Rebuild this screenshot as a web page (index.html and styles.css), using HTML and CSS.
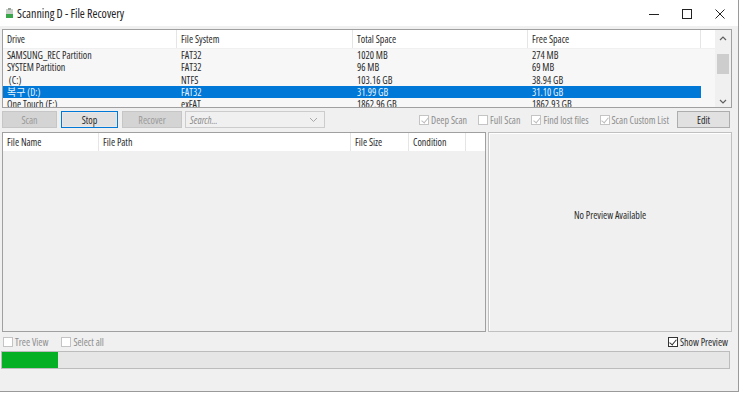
FILE: index.html
```html
<!DOCTYPE html>
<html>
<head>
<meta charset="utf-8">
<link rel="stylesheet" href="styles.css">
</head>
<body>
<div class="window">
  <div class="titlebar">
    <svg class="appicon" width="9" height="11" viewBox="0 0 9 11"><rect x="1" y="1" width="7" height="6" fill="#c9cfc9"/><rect x="1" y="6" width="7" height="4" fill="#3aa64a"/><rect x="3" y="0" width="3" height="2" fill="#9aa39a"/></svg>
    <span class="title">Scanning D - File Recovery</span>
    <div class="controls">
      <svg width="10" height="10" viewBox="0 0 10 10"><line x1="0" y1="5.5" x2="10" y2="5.5" stroke="#222" stroke-width="1"/></svg>
      <svg width="10" height="10" viewBox="0 0 10 10"><rect x="0.5" y="0.5" width="9" height="9" fill="none" stroke="#222" stroke-width="1"/></svg>
      <svg width="10" height="10" viewBox="0 0 10 10"><path d="M0.5 0.5 L9.5 9.5 M9.5 0.5 L0.5 9.5" stroke="#222" stroke-width="1"/></svg>
    </div>
  </div>
  <div class="client">
    <div class="drives">
      <div class="drives-main">
        <div class="lv-head">
          <div class="c c1">Drive</div><div class="c c2">File System</div><div class="c c3">Total Space</div><div class="c c4">Free Space</div><div class="c c5"></div>
        </div>
        <div class="lv-body">
          <div class="row"><div class="c c1">SAMSUNG_REC Partition</div><div class="c c2">FAT32</div><div class="c c3">1020 MB</div><div class="c c4">274 MB</div></div>
          <div class="row"><div class="c c1">SYSTEM Partition</div><div class="c c2">FAT32</div><div class="c c3">96 MB</div><div class="c c4">69 MB</div></div>
          <div class="row"><div class="c c1">&nbsp;(C:)</div><div class="c c2">NTFS</div><div class="c c3">103.16 GB</div><div class="c c4">38.94 GB</div></div>
          <div class="row sel"><div class="c c1">복구 (D:)</div><div class="c c2">FAT32</div><div class="c c3">31.99 GB</div><div class="c c4">31.10 GB</div></div>
          <div class="row"><div class="c c1">One Touch (E:)</div><div class="c c2">exFAT</div><div class="c c3">1862.96 GB</div><div class="c c4">1862.93 GB</div></div>
        </div>
      </div>
      <div class="vscroll">
        <svg width="8" height="5" viewBox="0 0 8 5"><path d="M1 4 L4 1 L7 4" fill="none" stroke="#606060" stroke-width="1.2"/></svg>
        <div class="thumb-track"><div class="thumb"></div></div>
        <svg width="8" height="5" viewBox="0 0 8 5"><path d="M1 1 L4 4 L7 1" fill="none" stroke="#606060" stroke-width="1.2"/></svg>
      </div>
    </div>

    <div class="toolbar">
      <div class="btn disabled w-scan">Scan</div>
      <div class="btn focus w-stop">Stop</div>
      <div class="btn disabled w-rec">Recover</div>
      <div class="combo">
        <span class="ph">Search...</span>
        <svg width="9" height="6" viewBox="0 0 9 6"><path d="M1 1 L4.5 4.5 L8 1" fill="none" stroke="#a8a8a8" stroke-width="1"/></svg>
      </div>
      <div class="spacer"></div>
      <label class="chk dis"><span class="box on"></span>Deep Scan</label>
      <label class="chk dis"><span class="box"></span>Full Scan</label>
      <label class="chk dis"><span class="box on"></span>Find lost files</label>
      <label class="chk dis"><span class="box on"></span>Scan Custom List</label>
      <div class="btn w-edit">Edit</div>
    </div>

    <div class="panes">
      <div class="files">
        <div class="lv-head">
          <div class="c f1">File Name</div><div class="c f2">File Path</div><div class="c f3">File Size</div><div class="c f4">Condition</div><div class="c f5"></div>
        </div>
      </div>
      <div class="preview">No Preview Available</div>
    </div>

    <div class="bottom">
      <label class="chk dis"><span class="box"></span>Tree View</label>
      <label class="chk dis"><span class="box"></span>Select all</label>
      <div class="spacer"></div>
      <label class="chk"><span class="box on"></span>Show Preview</label>
    </div>

    <div class="progress"><div class="fill" style="width:56px"></div></div>
  </div>
</div>
</body>
</html>
```

FILE: styles.css
```css
* { box-sizing: border-box; }
html, body { margin: 0; padding: 0; background: #ffffff; }
body {
  font-family: "Open Sans", "Noto Sans", "Liberation Sans", "Noto Sans CJK KR", sans-serif;
  font-stretch: 75%;
  font-size: 10px;
  color: #2a2a2a;
}
.window {
  width: 739px;
  height: 392px;
  border-right: 1px solid #9a9a9a;
  border-bottom: 1px solid #9a9a9a;
  background: #f0f0f0;
  display: flex;
  flex-direction: column;
}
.titlebar {
  height: 26px;
  background: #ffffff;
  display: flex;
  align-items: center;
  padding-left: 5px;
  flex-shrink: 0;
}
.appicon { margin-right: 3px; margin-top: 1px; }
.title { font-size: 12px; color: #222; }
.controls {
  margin-left: auto;
  display: flex;
  gap: 23px;
  padding-right: 13px;
  margin-top: 2px;
}
.client {
  flex: 1;
  display: flex;
  flex-direction: column;
  padding: 3px 6px 0 2px;
}
.drives {
  height: 79px;
  border: 1px solid #a0a0a0;
  display: flex;
  background: #f7f7f7;
  overflow: hidden;
  flex-shrink: 0;
}
.drives-main { flex: 1; display: flex; flex-direction: column; overflow: hidden; }
.lv-head {
  display: flex;
  height: 19px;
  background: #ffffff;
  border-bottom: 1px solid #f0f0f0;
  flex-shrink: 0;
}
.lv-head .c {
  border-right: 1px solid #e5e5e5;
  line-height: 18px;
  padding-left: 4px;
}
.c { white-space: nowrap; overflow: hidden; flex-shrink: 0; }
.c1 { width: 174px; }
.c2 { width: 176px; }
.c3 { width: 175px; }
.c4 { width: 173px; }
.c5 { flex: 1; border-right: none !important; }
.lv-body { display: flex; flex-direction: column; }
.row { display: flex; height: 12.3px; line-height: 12.3px; width: 698px; flex-shrink: 0; }
.row .c { padding-left: 4px; }
.row.sel { background: #0078d7; color: #eaf3fc; }
.vscroll {
  width: 16px;
  background: #f0f0f0;
  display: flex;
  flex-direction: column;
  align-items: center;
  padding: 6px 0 3px;
}
.thumb-track { flex: 1; width: 100%; padding: 13px 1px 0; }
.thumb { height: 20px; background: #cdcdcd; margin: 0 1px; }
.toolbar {
  display: flex;
  align-items: center;
  height: 17px;
  margin-top: 3px;
  flex-shrink: 0;
}
.btn {
  height: 17px;
  background: #e1e1e1;
  border: 1px solid #adadad;
  display: flex;
  align-items: center;
  justify-content: center;
  flex-shrink: 0;
}
.btn.disabled { background: #d4d4d4; border-color: #c6c6c6; color: #9a9a9a; }
.btn.focus { border: 1px solid #0078d7; background: #e1e1e1; box-shadow: inset 0 0 0 1px #e8e8e8; }
.w-scan { width: 55px; margin-right: 4px; }
.w-stop { width: 57px; margin-right: 4px; }
.w-rec { width: 60px; margin-right: 3px; }
.w-edit { width: 53px; margin-left: 8px; margin-right: 2px; }
.combo {
  width: 140px;
  height: 17px;
  border: 1px solid #cccccc;
  background: #f0f0f0;
  display: flex;
  align-items: center;
  padding: 0 6px 0 4px;
}
.combo .ph { font-style: italic; color: #8a8a8a; flex: 1; }
.spacer { flex: 1; }
.chk {
  display: flex;
  align-items: center;
  white-space: nowrap;
}
.toolbar .chk + .chk { margin-left: 11px; }
.chk.dis { color: #8d8d8d; }
.box {
  width: 10px;
  height: 10px;
  border: 1px solid #333;
  background: #fff;
  margin-right: 2px;
  position: relative;
}
.chk.dis .box { border-color: #c4c4c4; }
.box.on::after {
  content: "";
  position: absolute;
  left: 2.5px;
  top: 0px;
  width: 3px;
  height: 6px;
  border-right: 1px solid #333;
  border-bottom: 1px solid #333;
  transform: rotate(40deg);
}
.chk.dis .box.on::after { border-color: #bcbcbc; }
.panes {
  display: flex;
  height: 200px;
  margin-top: 4px;
  gap: 2px;
  flex-shrink: 0;
}
.files {
  width: 484px;
  border: 1px solid #a0a0a0;
  background: #f0f0f0;
  display: flex;
  flex-direction: column;
}
.f1 { width: 96px; }
.f2 { width: 252px; }
.f3 { width: 58px; }
.f4 { width: 57px; }
.f5 { flex: 1; border-right: none !important; }
.preview {
  flex: 1;
  border: 1px solid #c0c0c0;
  box-shadow: inset 1px 1px 0 #fff;
  display: flex;
  align-items: center;
  justify-content: center;
  padding-bottom: 34px;
}
.bottom {
  display: flex;
  align-items: center;
  height: 15px;
  margin-top: 2px;
  flex-shrink: 0;
  padding-left: 1px;
}
.bottom .chk + .chk { margin-left: 13px; }
.bottom .chk:last-child { margin-right: 4px; }
.progress {
  margin-top: 2px;
  height: 18px;
  width: 729px;
  margin-left: -1px;
  border: 1px solid #bcbcbc;
  background: #e6e6e6;
  flex-shrink: 0;
}
.fill { height: 100%; background: #06b025; }
```
